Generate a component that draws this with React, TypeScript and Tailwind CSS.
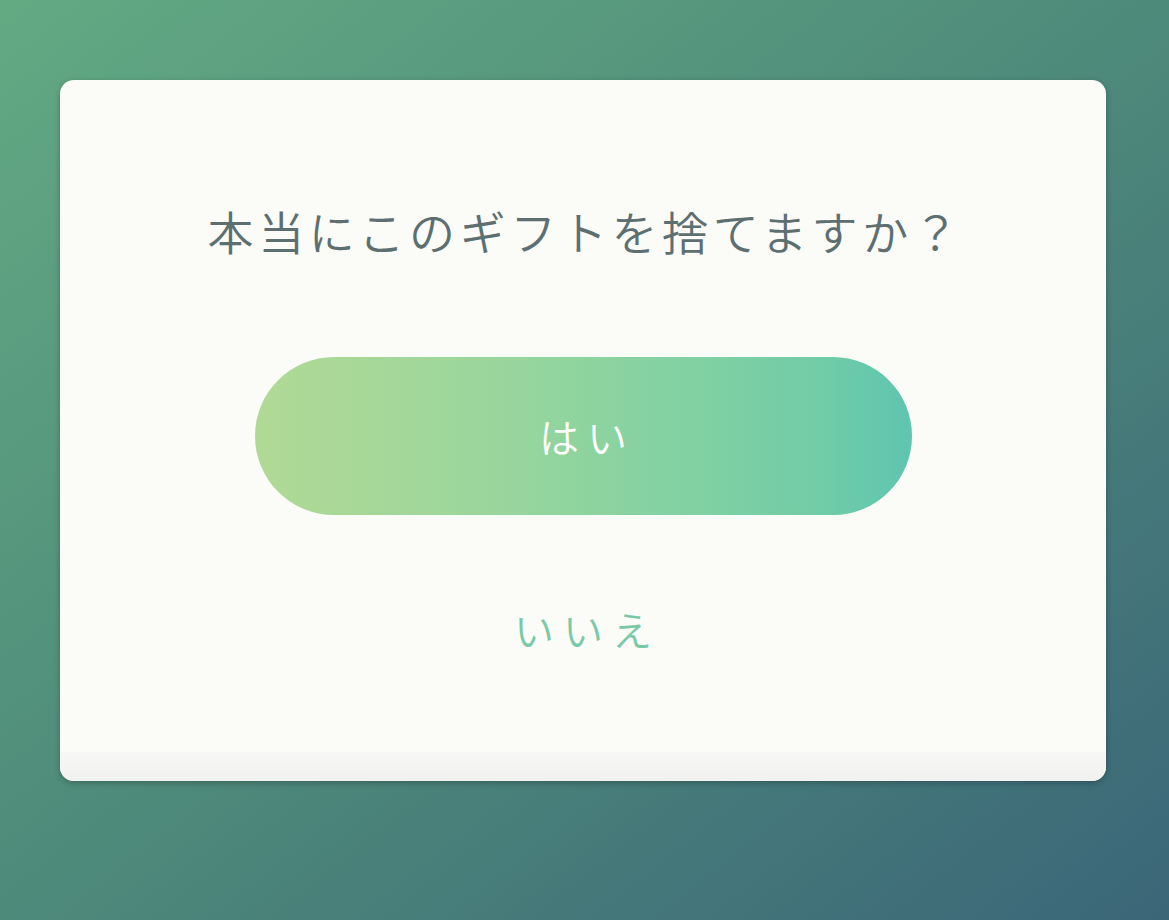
export default function App() {
  return (
    <div
      className="w-[1169px] h-[920px] overflow-hidden bg-gradient-to-br from-[#63aa83] via-[#4e8a7a] to-[#3b6678] flex flex-col pl-[60px] pt-[80px]"
      style={{ fontFamily: '"Noto Sans CJK JP", "Noto Sans", sans-serif' }}
    >
      <div className="w-[1046px] h-[701px] rounded-[14px] bg-[#fbfbf8] shadow-[0_2px_6px_rgba(0,0,0,0.25)] overflow-hidden flex flex-col">
        <div className="flex-1 flex flex-col items-center">
          <h1 className="mt-[118px] pl-[5px] text-[46px] leading-[64px] tracking-[4.6px] font-[350] text-[#5d6f70]">
            本当にこのギフトを捨てますか？
          </h1>
          <button className="mt-[95px] w-[657px] h-[158px] rounded-full bg-[linear-gradient(90deg,#b1d995_0%,#9bd69c_35%,#82d1a2_65%,#72cca6_85%,#5fc5b0_100%)] text-white text-[40px] font-[350] tracking-[8px] pl-[8px] flex items-center justify-center">
            はい
          </button>
          <button className="mt-[84px] pl-[9px] text-[40px] font-[350] tracking-[9px] text-[#79c9a6]">
            いいえ
          </button>
        </div>
        <div className="h-[29px] bg-gradient-to-b from-[#f7f7f5] to-[#f1f1ef]" />
      </div>
    </div>
  );
}
